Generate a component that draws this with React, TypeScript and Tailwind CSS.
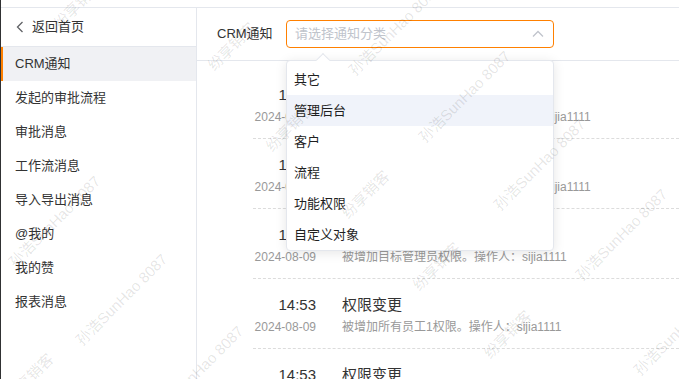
import React from 'react'

const menus = ["CRM通知", "发起的审批流程", "审批消息", "工作流消息", "导入导出消息", "@我的", "我的赞", "报表消息"]
const options = ["其它", "管理后台", "客户", "流程", "功能权限", "自定义对象"]

const rows = [
    { time: "14:53", title: "权限变更", date: "2024-08-09", desc: "被增加业务流程管理员权限。操作人：sijia1111" },
    { time: "14:53", title: "权限变更", date: "2024-08-09", desc: "被增加数据权限管理员权限。操作人：sijia1111" },
    { time: "14:53", title: "权限变更", date: "2024-08-09", desc: "被增加目标管理员权限。操作人：sijia1111" },
    { time: "14:53", title: "权限变更", date: "2024-08-09", desc: "被增加所有员工1权限。操作人：sijia1111" },
    { time: "14:53", title: "权限变更", date: "2024-08-09", desc: "被增加所有员工权限。操作人：sijia1111" },
]

// watermark centres
const marks = [
    { x: 395, y: 30, t: "孙浩SunHao 8087" },
    { x: 465, y: 97, t: "孙浩SunHao 8087" },
    { x: 540, y: 165, t: "孙浩SunHao 8087" },
    { x: 622, y: 235, t: "孙浩SunHao 8087" },
    { x: 55, y: 222, t: "孙浩SunHao 8087" },
    { x: 122, y: 300, t: "孙浩SunHao 8087" },
    { x: 198, y: 372, t: "孙浩SunHao 8087" },
    { x: 680, y: 330, t: "孙浩SunHao 8087" },
    { x: 78, y: 5, t: "纷享销客" },
    { x: 232, y: 47, t: "纷享销客" },
    { x: 290, y: 128, t: "纷享销客" },
    { x: 366, y: 195, t: "纷享销客" },
    { x: 437, y: 267, t: "纷享销客" },
    { x: 508, y: 335, t: "纷享销客" },
    { x: 30, y: 378, t: "纷享销客" },
]

export default function App() {
    return (
        <div className="relative w-[679px] h-[379px] overflow-hidden bg-white flex font-['Liberation_Sans','Noto_Sans_CJK_SC',sans-serif] text-[13px] text-[#333]">
            <div className="w-px bg-[#303133] shrink-0" />
            <div className="flex-1 flex flex-col">
                <div className="h-[7px] shrink-0" />
                <div className="flex-1 flex border-t border-[#e4e7ed]">
                    {/* sidebar */}
                    <div className="w-[196px] shrink-0 border-r border-[#e4e7ed]">
                        <div className="h-[39px] flex items-center pl-[15px] gap-[8px] border-b border-[#e4e7ed]">
                            <svg width="8" height="12" viewBox="0 0 8 12" fill="none">
                                <polyline points="6.5,1 1.5,6 6.5,11" stroke="#606266" strokeWidth="1.3" />
                            </svg>
                            <span>返回首页</span>
                        </div>
                        {menus.map((m, i) => (
                            <div key={m} className={i === 0
                                ? "h-[34px] flex items-center pl-[12px] border-l-2 border-[#ff8000] bg-[#f0f1f4]"
                                : "h-[34px] flex items-center pl-[14px]"}>
                                {m}
                            </div>
                        ))}
                    </div>

                    {/* main */}
                    <div className="relative flex-1 flex flex-col">
                        <div className="h-[53px] shrink-0 flex items-center pl-[20px] border-b border-[#e4e7ed]">
                            <span className="w-[69px]">CRM通知</span>
                            <div className="w-[268px] h-[28px] rounded-[4px] border border-[#ff8000] flex items-center justify-between pl-[8px] pr-[9px]">
                                <span className="text-[#c0c4cc]">请选择通知分类</span>
                                <svg width="12" height="8" viewBox="0 0 12 8" fill="none">
                                    <polyline points="1,6.5 6,1.5 11,6.5" stroke="#c0c4cc" strokeWidth="1.3" />
                                </svg>
                            </div>
                        </div>

                        <div className="pt-[8px] pl-[56px]">
                            {rows.map((r, i) => (
                                <div key={i} className="pt-[15px] pb-[10px] border-b border-dashed border-[#dcdcdc]">
                                    <div className="h-[22px] flex items-center">
                                        <span className="w-[63px] text-right text-[15px]">{r.time}</span>
                                        <span className="ml-[26px] text-[15px]">{r.title}</span>
                                    </div>
                                    <div className="h-[22px] flex items-center text-[12px] text-[#999]">
                                        <span className="w-[63px] text-right">{r.date}</span>
                                        <span className="ml-[26px]">{r.desc}</span>
                                    </div>
                                </div>
                            ))}
                        </div>

                        {/* dropdown */}
                        <div className="absolute left-[89px] top-[52px] w-[268px] h-[191px] bg-white border border-[#e4e7ed] rounded-[4px] shadow-[0_2px_12px_rgba(0,0,0,0.1)] pt-[3px]">
                            <div className="absolute left-[31px] -top-[6px] w-[10px] h-[10px] rotate-45 bg-white border-l border-t border-[#e4e7ed]" />
                            {options.map((o, i) => (
                                <div key={o} className={i === 1
                                    ? "relative h-[31px] flex items-center pl-[7px] bg-[#f0f3fa] text-[#1f1f1f]"
                                    : "relative h-[31px] flex items-center pl-[7px] text-[#1f1f1f]"}>
                                    {o}
                                </div>
                            ))}
                        </div>
                    </div>
                </div>
            </div>

            {/* watermark */}
            <div className="absolute inset-0 pointer-events-none">
                {marks.map((m, i) => (
                    <span key={i} className="absolute whitespace-nowrap text-[15px] text-[rgba(0,0,0,0.11)] -translate-x-1/2 -translate-y-1/2 -rotate-45"
                        style={{ left: m.x, top: m.y }}>
                        {m.t}
                    </span>
                ))}
            </div>
        </div>
    )
}
